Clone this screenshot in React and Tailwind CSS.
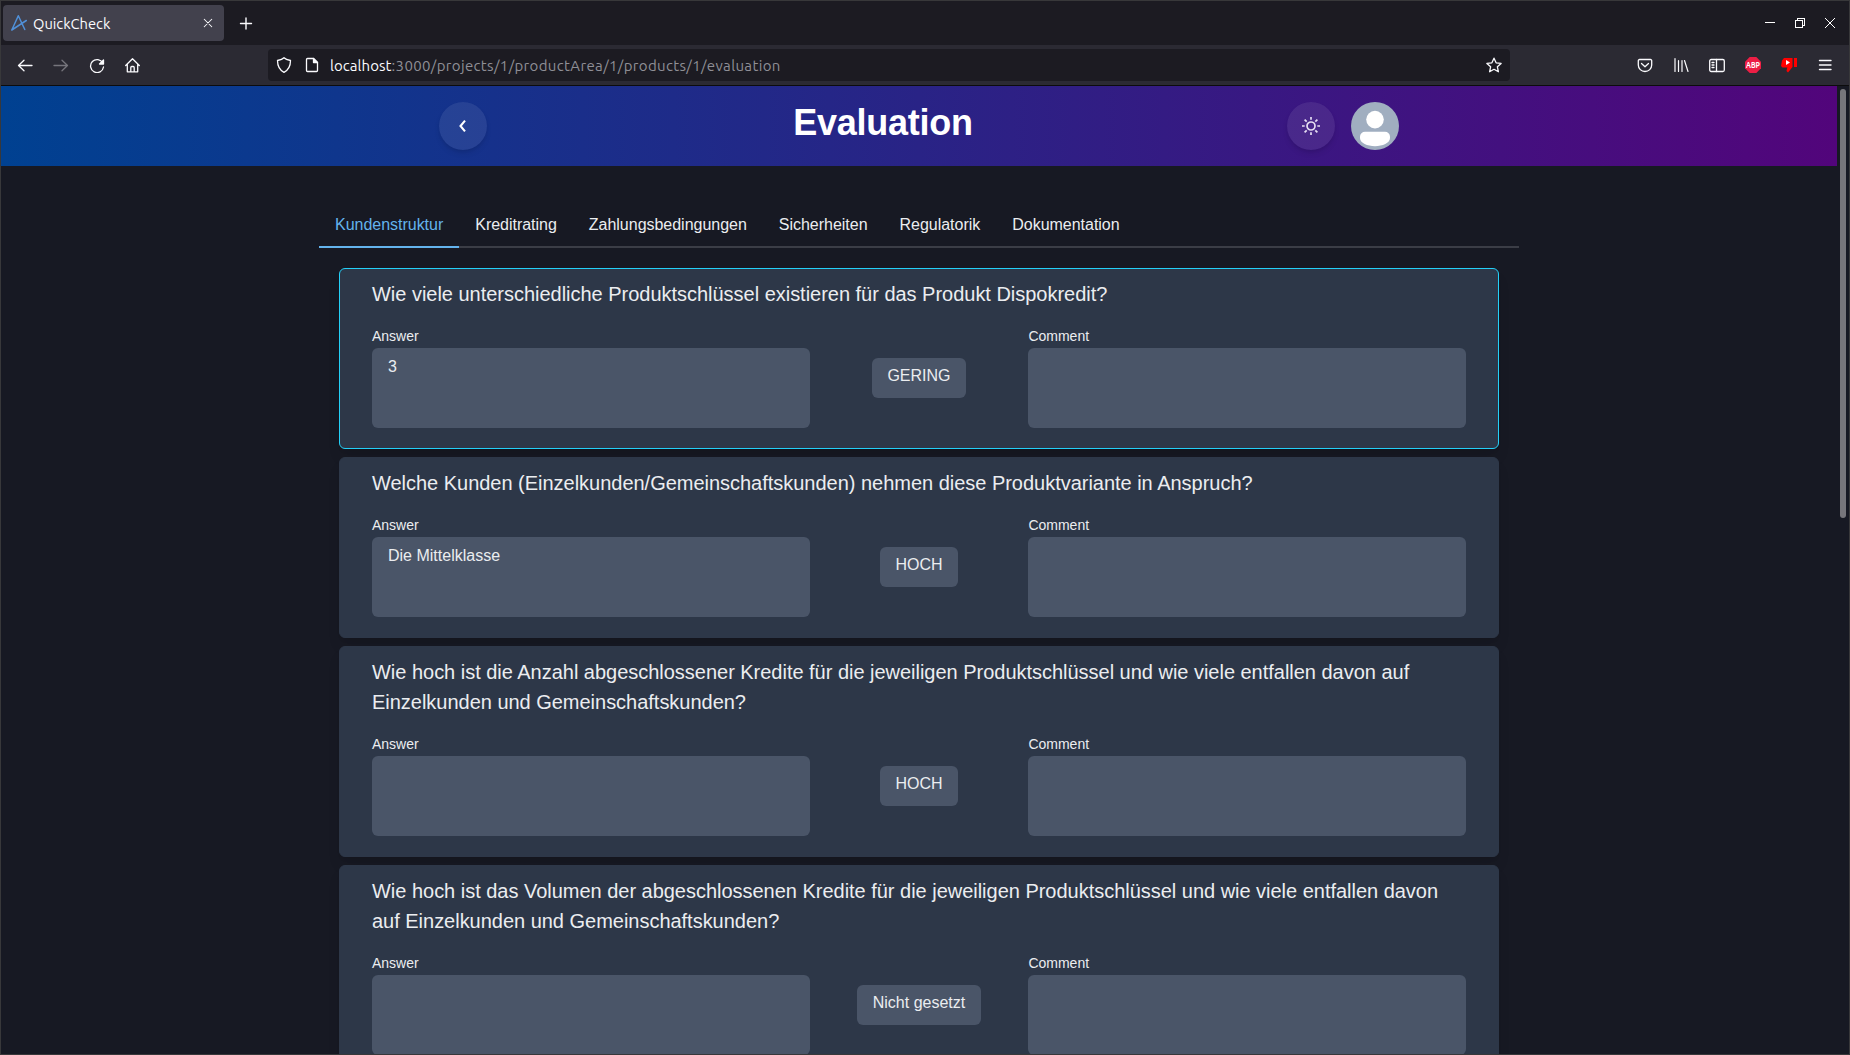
const cards = [
  { q: ['Wie viele unterschiedliche Produktschlüssel existieren für das Produkt Dispokredit?'], a: '3', b: 'GERING', active: true },
  { q: ['Welche Kunden (Einzelkunden/Gemeinschaftskunden) nehmen diese Produktvariante in Anspruch?'], a: 'Die Mittelklasse', b: 'HOCH' },
  { q: ['Wie hoch ist die Anzahl abgeschlossener Kredite für die jeweiligen Produktschlüssel und wie viele entfallen davon auf', 'Einzelkunden und Gemeinschaftskunden?'], a: '', b: 'HOCH' },
  { q: ['Wie hoch ist das Volumen der abgeschlossenen Kredite für die jeweiligen Produktschlüssel und wie viele entfallen davon', 'auf Einzelkunden und Gemeinschaftskunden?'], a: '', b: 'Nicht gesetzt' },
];
const tabs = ['Kundenstruktur', 'Kreditrating', 'Zahlungsbedingungen', 'Sicherheiten', 'Regulatorik', 'Dokumentation'];

function Icon({ size = 16, className = '', children, sw = 1.3 }) {
  return (
    <svg width={size} height={size} viewBox="0 0 16 16" fill="none" stroke="currentColor" strokeWidth={sw} strokeLinecap="round" strokeLinejoin="round" className={'shrink-0 ' + className}>
      {children}
    </svg>
  );
}

function TabStrip() {
  return (
    <div className="flex h-[44px] items-center bg-[#1c1b22] text-[#fbfbfe]">
      <div className="ml-[2px] flex h-[36px] w-[221px] items-center rounded bg-[#42414d] pl-2 pr-[10px]">
        <Icon sw={1.5} className="text-[#5090d8]">
          <path d="M.8 15 7.300.8 13.800 14.500M.8 15 15.300 5.500" />
        </Icon>
        <span className="ml-[6px] mt-[2px] text-[14.7px]">QuickCheck</span>
        <Icon size={12} sw={1.4} className="ml-auto"><path d="M3 3 13 13M13 3 3 13" /></Icon>
      </div>
      <Icon className="ml-[14px]" sw={1.4}><path d="M8 3v11M2.500 8.500h11" /></Icon>
      <div className="ml-auto mr-[14px] flex items-center gap-[20px]">
        <svg width="10" height="10" shapeRendering="crispEdges"><path d="M0 4.5h10" stroke="#fff" /></svg>
        <svg width="10" height="10" fill="none" stroke="#fff" shapeRendering="crispEdges"><path d="M.5 2.5h7v7h-7zM2.5 2.5v-2h7v7h-2" /></svg>
        <svg width="10" height="10" stroke="#fff"><path d="M0 0 10 10M10 0 0 10" /></svg>
      </div>
    </div>
  );
}

function Toolbar() {
  return (
    <div className="flex h-[40px] items-center bg-[#2b2a33] text-[#fbfbfe]">
      <Icon className="ml-4"><path d="M15 8.500H1.500M7 3.200 1.500 8.500 7 13.800" /></Icon>
      <Icon className="ml-5 text-[#76757c]"><path d="M1 8.500h13.500M9 3.200 14.500 8.500 9 13.800" /></Icon>
      <Icon className="ml-5"><path d="M13.800 6A6.500 6.500 0 1 0 14.500 10" /><path d="M14.500 3v4h-4z" fill="currentColor" /></Icon>
      <Icon className="ml-5"><path d="M.7 8.500 7.500 1.700l6.800 6.800M2.300 7.300v7.500h10.400V7.300M5.800 14.500V10.500a1 1 0 0 1 1-1h1.400a1 1 0 0 1 1 1v4" /></Icon>
      <div className="ml-[127px] flex h-8 w-[1242px] items-center rounded bg-[#1c1b22] pl-2 pr-2">
        <Icon><path d="M8 .8C9.500 2.300 12 3 14.500 3.500 14.500 9 12.500 13 8 15.300 3.500 13 1.500 9 1.500 3.500 4 3 6.500 2.300 8 .8z" /></Icon>
        <Icon className="ml-3"><path d="M3.500 1.500h6l4 4v8a1 1 0 0 1-1 1h-9a1 1 0 0 1-1-1v-11a1 1 0 0 1 1-1z" /><path d="M9.500 1.500v4h4z" fill="currentColor" /></Icon>
        <span className="ml-[10px] mt-[2px] text-[15px] tracking-[.35px] text-[#8f8f96]"><span className="tracking-[.06px] text-[#fbfbfe]">localhost</span>:3000/projects/1/productArea/1/products/1/evaluation</span>
        <Icon className="ml-auto"><path d="m8 1.200 2.100 4.600 5 .6-3.700 3.400 1 5L8 12.300l-4.400 2.500 1-5L.9 6.400l5-.6z" /></Icon>
      </div>
      <div className="ml-auto mr-4 flex items-center gap-5">
        <Icon><path d="M2.500 2.500h11a1.200 1.200 0 0 1 1.200 1.200V8a6.700 6.500 0 0 1-13.400 0V3.700A1.200 1.200 0 0 1 2.500 2.500zM4.500 6.500 8 9.800 11.500 6.500" /></Icon>
        <Icon sw={1.2}><path d="M2 1.500v13M5.500 3.500v11M9 3.500v11M11.500 3.500l3.500 11" /></Icon>
        <Icon><rect x=".7" y="2.500" width="14.600" height="12" rx="1.500" /><path d="M7.500 2.500v12M3 5.500h2M3 8h2M3 10.500h2" /></Icon>
        <svg width="16" height="16" viewBox="0 0 16 16">
          <path fill="#ed1e45" d="M4.700 0h6.600L16 4.700v6.600L11.300 16H4.700L0 11.300V4.700z" />
          <text x="1" y="11.100" textLength="14" lengthAdjust="spacingAndGlyphs" fontSize="8.500" fontWeight="700" fill="#fff">ABP</text>
        </svg>
        <svg width="16" height="16" viewBox="0 0 16 16"><path fill="#f00" d="M3 1h8.500v9L7 15.500 5.500 14l.8-3.500H1.500L0 9l1-5.500zM13 1h3v9h-3z" /><path fill="#fff" d="m5 3 4 2.500L5 8z" /></svg>
        <Icon sw={1.400}><path d="M2.500 3.500h11.500M2.500 8h11.500M2.500 12.500h11.500" /></Icon>
      </div>
    </div>
  );
}

function Header() {
  return (
    <header className="flex h-20 shrink-0 justify-center bg-linear-to-r/srgb from-[#004191] to-[#52057b] text-white">
      <div className="grid w-[960px] grid-cols-[1fr_auto_1fr] items-center">
        <div className="flex size-12 items-center justify-center rounded-full bg-white/8 shadow-md">
          <svg width="14" height="14" viewBox="0 0 14 14" fill="none" stroke="#fff" strokeWidth="2.100"><path d="M9 1.600 4.500 7l4.500 5.400" /></svg>
        </div>
        <h1 className="relative -left-9 -top-[3px] text-4xl font-bold tracking-[-.25px]">Evaluation</h1>
        <div className="flex justify-end gap-4">
          <div className="flex size-12 items-center justify-center rounded-full bg-white/8 shadow-md">
            <svg width="18" height="18" viewBox="0 0 18 18" fill="none" stroke="#e6def2" strokeWidth="1.700"><circle cx="9" cy="9" r="4" /><path d="M9 0v2.700M9 15.300V18M0 9h2.700M15.300 9H18M2.600 2.600l2.100 2.100M13.300 13.300l2.100 2.100M15.400 2.600l-2.100 2.100M4.700 13.300l-2.100 2.100" /></svg>
          </div>
          <svg width="48" height="48" viewBox="0 0 48 48"><circle cx="24" cy="24" r="24" fill="#a0aec0" /><circle cx="24" cy="17.600" r="8.800" fill="#fff" /><path fill="#fff" d="M14 29.800h20a5 5 0 0 1 5 5v1.200c0 5-7.500 8.200-15 8.200S9 41 9 36v-1.200a5 5 0 0 1 5-5z" /></svg>
        </div>
      </div>
    </header>
  );
}

function Field({ label, value }) {
  return (
    <div className="w-2/5">
      <div className="h-6 text-sm leading-6">{label}</div>
      <div className="h-20 rounded-md bg-[#4a5568] px-4 py-[7px] text-base">{value}</div>
    </div>
  );
}

function Card({ q, a, b, active }) {
  return (
    <section className={'shrink-0 rounded-md border bg-[#2d3748] px-8 pb-5 pt-[10px] shadow-lg ' + (active ? 'border-[#24d0f8]' : 'border-[#2d3748]')}>
      <div className="text-xl leading-[30px] tracking-[-.02px]">{q.map((l) => <div key={l} className="whitespace-nowrap">{l}</div>)}</div>
      <div className="mt-[15px] flex">
        <Field label="Answer" value={a} />
        <div className="flex w-1/5 items-start justify-center pt-[34px]">
          <div className={'h-10 rounded-md bg-[#4a5568] pt-[6px] text-base ' + (b === 'Nicht gesetzt' ? 'px-4' : 'px-[15px]')}>{b}</div>
        </div>
        <Field label="Comment" value="" />
      </div>
    </section>
  );
}

export default function App() {
  return (
    <div className="flex h-[1055px] w-[1850px] flex-col overflow-hidden border border-[#38383a] bg-[#171923]">
      <div className="shrink-0 border-b border-[#0c0c0d] font-['Ubuntu','Noto_Sans',sans-serif]">
        <TabStrip />
        <Toolbar />
      </div>
      <div className="flex min-h-0 grow font-['Liberation_Sans',sans-serif] text-[#ebedf0]">
        <div className="flex min-w-0 grow flex-col overflow-hidden">
          <Header />
          <main className="mx-auto mt-10 flex w-[1200px] flex-col">
            <nav className="flex h-[42px] shrink-0 border-b-2 border-[#3b3d46] tracking-[-.02px]">
              {tabs.map((t, i) => (
                <div key={t} className={'-mb-[2px] flex h-[42px] items-start border-b-2 px-4 pt-[7px] text-base ' + (i === 0 ? 'border-[#63b3ed] text-[#63b3ed]' : 'border-transparent')}>{t}</div>
              ))}
            </nav>
            <div className="flex flex-col gap-2 px-5 pt-5">
              {cards.map((c) => <Card key={c.q[0]} {...c} />)}
            </div>
          </main>
        </div>
        <div className="w-3 shrink-0 px-[3px] pt-[3px]">
          <div className="h-[429px] w-[6px] rounded-full bg-[#77767b]" />
        </div>
      </div>
    </div>
  );
}
